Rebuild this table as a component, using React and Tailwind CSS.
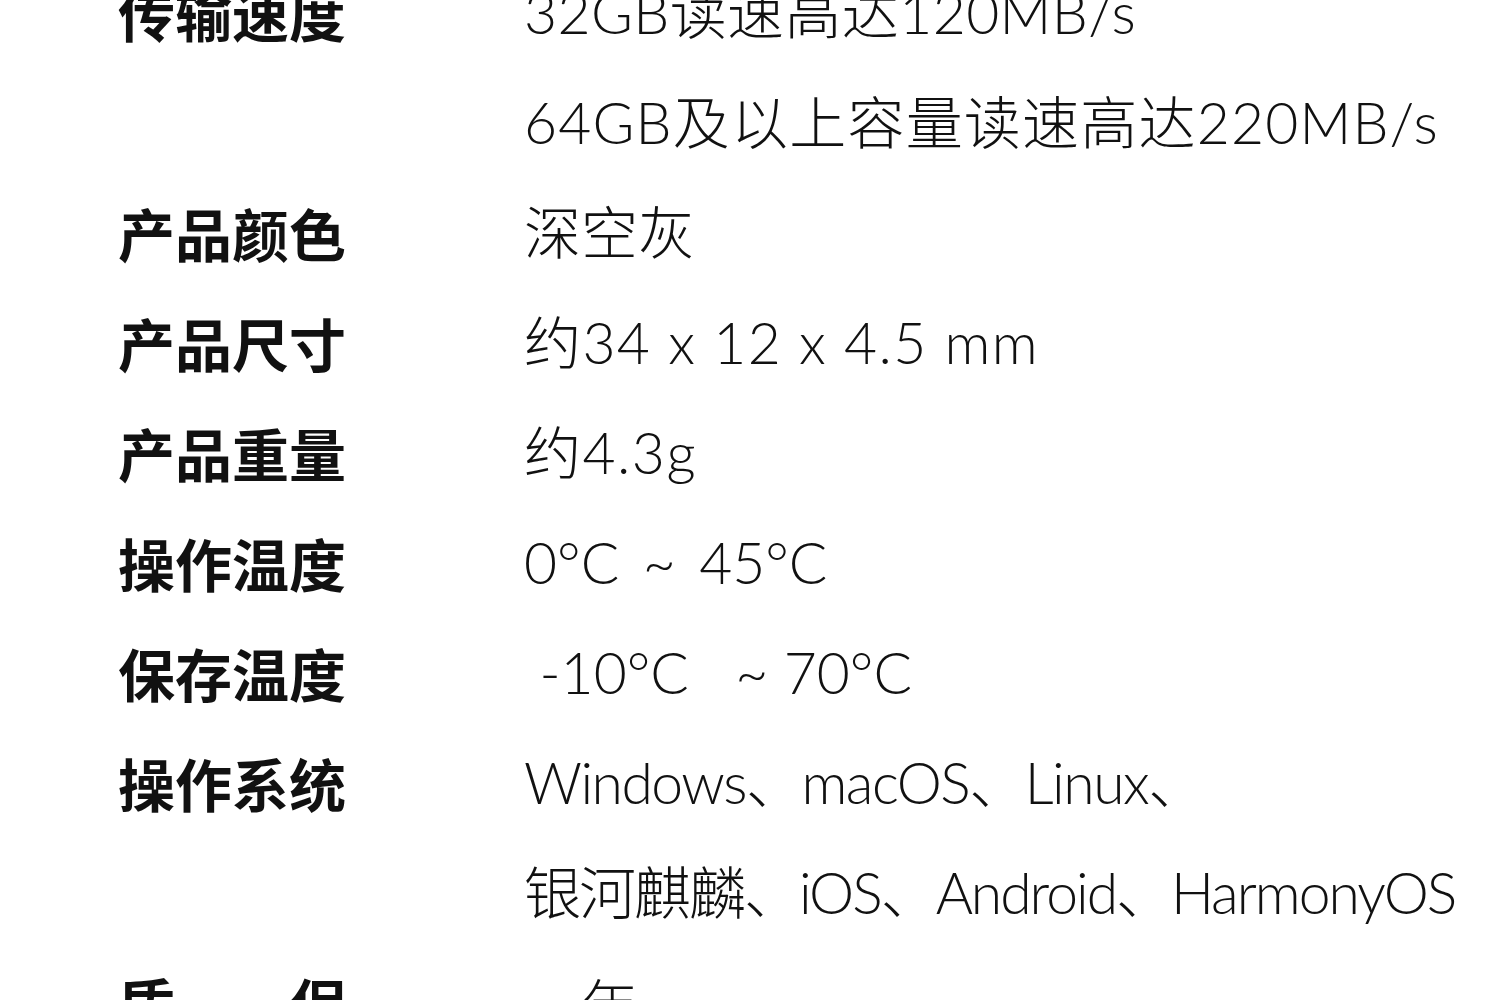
export default function App() {
  const rows = [
    {
      label: '传输速度',
      lines: [
        { text: '32GB读速高达120MB/s', cls: 'tracking-[0.4px]' },
        { text: '64GB及以上容量读速高达220MB/s', cls: 'tracking-[1.2px]' },
      ],
    },
    { label: '产品颜色', lines: [{ text: '深空灰', cls: '' }] },
    { label: '产品尺寸', lines: [{ text: '约34 x 12 x 4.5 mm', cls: 'tracking-[1.4px]' }] },
    { label: '产品重量', lines: [{ text: '约4.3g', cls: 'tracking-[1.5px]' }] },
    { label: '操作温度', lines: [{ text: '0°C ~ 45°C', cls: '[word-spacing:8px]' }] },
    { label: '保存温度', lines: [{ text: ' -10°C   ~ 70°C', cls: '' }] },
    {
      label: '操作系统',
      lines: [
        { text: 'Windows、macOS、Linux、', cls: 'tracking-[-1.5px]' },
        { text: '银河麒麟、iOS、Android、HarmonyOS', cls: 'tracking-[-2px]' },
      ],
    },
  ];

  return (
    <div
      className="w-[1500px] h-[1000px] overflow-hidden bg-white text-[#111]"
      style={{ fontFamily: '"Noto Sans CJK SC", "Noto Sans", sans-serif' }}
    >
      <div className="-mt-[43px] pl-[118px] flex flex-col">
        {rows.map((row) => (
          <div key={row.label} className="flex">
            <div className="w-[406px] shrink-0 text-[57px] leading-[110px] font-bold">
              {row.label}
            </div>
            <div className="flex flex-col text-[57px] leading-[110px] font-light font-['Lato','Noto_Sans_CJK_SC',sans-serif]">
              {row.lines.map((line) => (
                <span key={line.text} className={`whitespace-pre ${line.cls}`}>{line.text}</span>
              ))}
            </div>
          </div>
        ))}
        <div className="flex">
          <div className="w-[229px] mr-[177px] shrink-0 flex justify-between text-[57px] leading-[110px] font-bold">
            <span>质</span>
            <span>保</span>
          </div>
          <div className="text-[57px] leading-[110px] font-light">一年</div>
        </div>
      </div>
    </div>
  );
}
